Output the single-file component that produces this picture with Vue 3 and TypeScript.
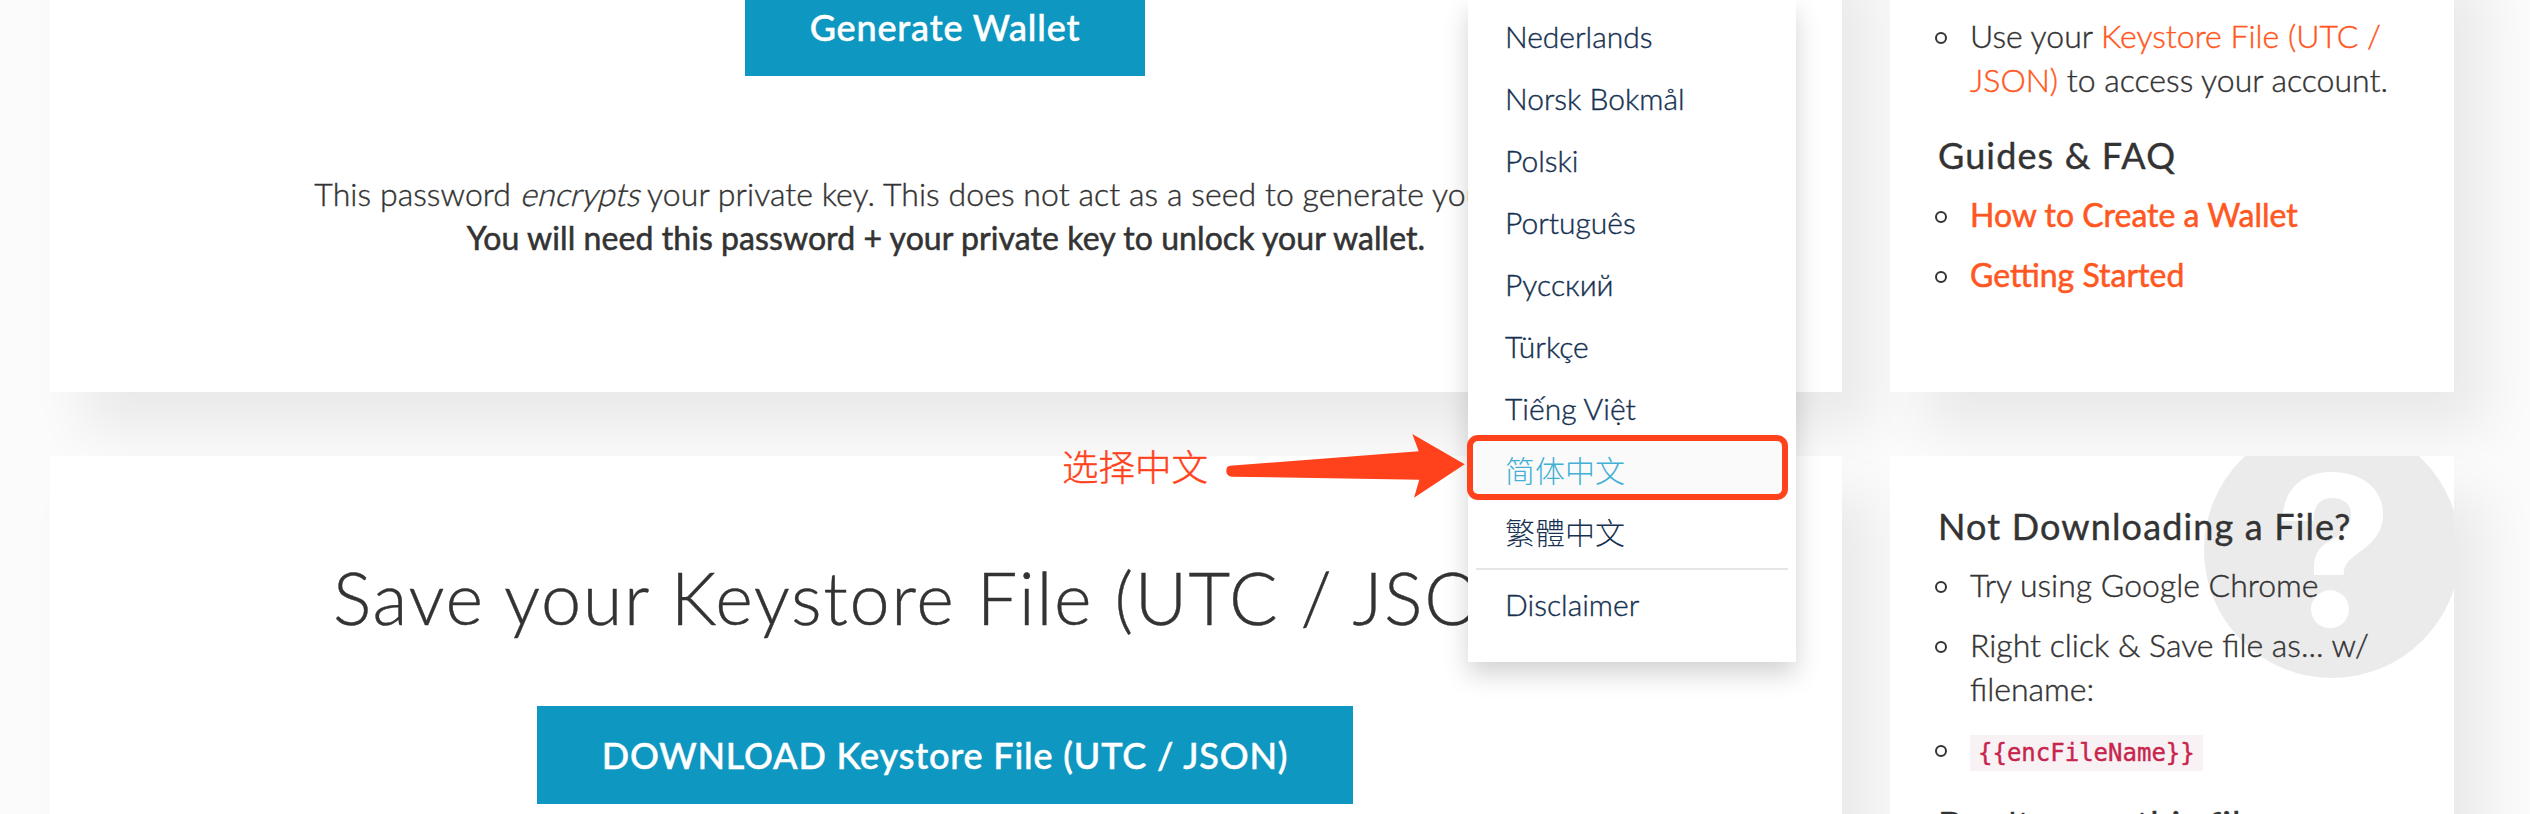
<script setup lang="ts">
interface MenuItem {
  label: string
  active?: boolean
  cjk?: boolean
}

const languages: MenuItem[] = [
  { label: 'Nederlands' },
  { label: 'Norsk Bokmål' },
  { label: 'Polski' },
  { label: 'Português' },
  { label: 'Русский' },
  { label: 'Türkçe' },
  { label: 'Tiếng Việt' },
  { label: '简体中文', active: true, cjk: true },
  { label: '繁體中文', cjk: true },
]

const guides: string[] = ['How to Create a Wallet', 'Getting Started']
const fileToken = '{{encFileName}}'
</script>

<template>
  <div class="page">
    <div class="row row-first">
      <main class="card generate">
        <button class="btn">Generate Wallet</button>
        <p class="note">
          <span class="lead">This password <em>encrypts</em> your private key. This does not act as a seed to generate your keys.</span><br />
          <strong>You will need this password + your private key to unlock your wallet.</strong>
        </p>
      </main>
      <aside class="card side">
        <ul class="list">
          <li>Use your <a>Keystore File (UTC / JSON)</a> to access your account.</li>
        </ul>
        <h4>Guides &amp; FAQ</h4>
        <ul class="list">
          <li v-for="g in guides" :key="g"><a class="strong">{{ g }}</a></li>
        </ul>
      </aside>
    </div>

    <div class="row row-second">
      <main class="card save">
        <h1>Save your Keystore File (UTC / JSON)</h1>
        <button class="btn">DOWNLOAD Keystore File (UTC / JSON)</button>
      </main>
      <aside class="card side help">
        <svg class="question" viewBox="0 0 256 256" aria-hidden="true">
          <circle cx="128" cy="128" r="128" fill="#ebebeb" />
          <path
            d="M78.3 99C79 68 97 50 127.7 50C158 50 179 67 179 92C179 112 167 122 153 132C143 139 139.7 144 139.7 153H110V146C110 132 115 125 126 119C139 112 147 103 147 92C147 82 139 76 127.7 76C116 76 109.3 84 109.3 99Z"
            fill="#fff"
          />
          <circle cx="126" cy="187.3" r="19" fill="#fff" />
        </svg>
        <div class="content">
          <h4>Not Downloading a File?</h4>
          <ul class="list">
            <li>Try using Google Chrome</li>
            <li>Right click &amp; Save file as... w/ filename:</li>
            <li class="code-row"><code>{{ fileToken }}</code></li>
          </ul>
          <h4 class="next">Don't open this file on your computer</h4>
        </div>
      </aside>
    </div>

    <nav class="menu">
      <a
        v-for="l in languages"
        :key="l.label"
        class="item"
        :class="{ active: l.active, cjk: l.cjk }"
      >{{ l.label }}</a>
      <hr />
      <a class="item">Disclaimer</a>
    </nav>

    <div class="marker"></div>
    <div class="callout">选择中文</div>
    <svg class="arrow" viewBox="0 0 246 66" aria-hidden="true">
      <path
        d="M10 31.7L198.7 17.3L192.3 0L244.7 30.3L194 63.7L199.3 45.7L12 42.7C8.5 42.5 6.3 40 6.3 37C6.3 33.5 7.5 32 10 31.7Z"
        fill="#ff421c"
      />
    </svg>
  </div>
</template>

<style>
html,
body {
  margin: 0;
  overflow: hidden;
}
</style>

<style scoped>
.page {
  position: relative;
  width: 2530px;
  height: 814px;
  overflow: hidden;
  box-sizing: border-box;
  background: #fbfbfb;
  color: #333;
  font-family: Lato, "Noto Sans CJK SC", sans-serif;
  font-size: 32px;
  font-weight: 300;
  line-height: 44px;
  -webkit-text-stroke: 0.4px currentColor;
}
.row {
  display: flex;
  gap: 48px;
  padding: 0 76px 0 50px;
}
.row-first {
  height: 392px;
}
.row-second {
  height: 420px;
  margin-top: 64px;
}
.card {
  position: relative;
  box-sizing: border-box;
  background: #fff;
  box-shadow: 32px 38px 50px 0 rgba(0, 0, 0, 0.07);
}
.generate,
.save {
  width: 1792px;
  display: flex;
  flex-direction: column;
  align-items: center;
}
.generate {
  margin-top: -60px;
  height: 452px;
  padding-top: 38px;
}
.btn {
  height: 98px;
  padding: 0 65px;
  margin-right: 2px;
  flex: none;
  border: 0;
  background: #0e97c0;
  color: #fff;
  font-family: inherit;
  font-size: 36px;
  font-weight: 500;
  letter-spacing: 0.83px;
  line-height: 98px;
  -webkit-text-stroke: 0.5px currentColor;
}
.note {
  margin: 96px 0 0;
  text-align: center;
  letter-spacing: 0.07px;
}
.lead {
  padding-right: 7px;
}
.note em {
  display: inline-block;
  font-style: normal;
  transform: skewX(-14deg);
  transform-origin: 0 75%;
}
strong,
.strong {
  font-weight: 400;
  -webkit-text-stroke: 0.55px currentColor;
}
.side {
  width: 564px;
}
.row-first .side {
  margin-top: -60px;
  height: 452px;
  padding: 74px 48px 0;
}
.list {
  list-style: none;
  margin: 0;
  padding: 0;
}
.list li {
  position: relative;
  padding-left: 32px;
  margin-bottom: 16px;
}
.list li::before {
  content: "";
  position: absolute;
  left: -3px;
  top: 18px;
  width: 8px;
  height: 8px;
  border: 2px solid #333;
  border-radius: 50%;
}
a {
  color: #ff5722;
}
h4 {
  margin: 31px 0 16px;
  font-size: 36px;
  font-weight: 400;
  line-height: 44px;
  letter-spacing: 1.15px;
}
.save {
  height: 500px;
}
h1 {
  margin: 101px 0 0;
  font-size: 72px;
  font-weight: 300;
  line-height: 80px;
  letter-spacing: 1.65px;
}
.save .btn {
  margin-top: 69px;
}
.help {
  height: 500px;
}
.question {
  position: absolute;
  left: 314px;
  top: -34px;
  width: 256px;
  height: 256px;
  clip-path: inset(34px 6px 0 0);
}
.content {
  position: relative;
  padding: 48px 48px 0;
}
.content h4 {
  margin: 0 0 15px;
}
.code-row code {
  display: inline-block;
  margin-top: 2px;
  padding: 4px 8px;
  background: #f9f2f4;
  color: #c7254e;
  font-family: "DejaVu Sans Mono", monospace;
  font-size: 24px;
  font-weight: 400;
  line-height: 28px;
}
.content .next {
  margin-top: 31px;
}
.menu {
  position: absolute;
  left: 1468px;
  top: 0;
  width: 328px;
  height: 662px;
  padding: 5px 8px 0;
  box-sizing: border-box;
  background: #fff;
  box-shadow: 0 12px 24px rgba(0, 0, 0, 0.175);
}
.item {
  display: block;
  height: 62px;
  padding-left: 29px;
  color: #163151;
  font-size: 30px;
  line-height: 62px;
}
.cjk {
  -webkit-text-stroke: 0;
}
.active {
  background: #fafafa;
  color: #42b0d5;
}
.menu hr {
  height: 2px;
  margin: 5px 0 3px;
  border: 0;
  background: #e5e5e5;
}
.marker {
  position: absolute;
  left: 1467px;
  top: 435px;
  width: 309px;
  height: 53px;
  border: 6px solid #ff421c;
  border-radius: 11px;
}
.callout {
  position: absolute;
  left: 1062px;
  top: 443px;
  color: #ff421c;
  font-family: "Noto Sans CJK SC", sans-serif;
  font-size: 36.5px;
  font-weight: 300;
  line-height: 46px;
}
.arrow {
  position: absolute;
  left: 1220px;
  top: 434px;
  width: 246px;
  height: 66px;
}
</style>
